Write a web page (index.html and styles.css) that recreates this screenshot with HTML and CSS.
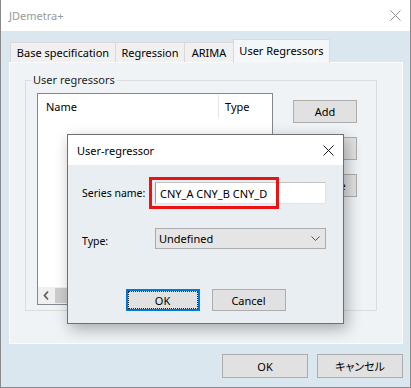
FILE: index.html
```html
<!DOCTYPE html>
<html lang="en">
<head>
  <meta charset="UTF-8">
  <title>JDemetra+</title>
  <link rel="stylesheet" href="styles.css">
</head>
<body>
  <div class="window">
    <div class="titlebar">
      <span class="title inactive">JDemetra+</span>
      <svg class="close" width="11" height="11" viewBox="0 0 11 11">
        <path d="M0.5 0.5 L10.5 10.5 M10.5 0.5 L0.5 10.5" stroke="#8c8c8c" stroke-width="1" fill="none"/>
      </svg>
    </div>

    <div class="client">
      <div class="tabs">
        <div class="tab tab-base">Base specification</div>
        <div class="tab tab-reg">Regression</div>
        <div class="tab tab-arima">ARIMA</div>
        <div class="tab tab-user active">User Regressors</div>
      </div>

      <div class="panel">
        <fieldset class="group">
          <legend>User regressors</legend>
          <div class="group-body">
            <div class="list">
              <div class="list-head">
                <div class="col col-name">Name</div>
                <div class="col col-type">Type</div>
              </div>
              <div class="list-body"></div>
              <div class="hscroll">
                <div class="arrow">
                  <svg width="17" height="17" viewBox="0 0 17 17">
                    <polyline points="10,4.5 6.5,8.5 10,12.5" stroke="#606060" stroke-width="1.8" fill="none"/>
                  </svg>
                </div>
                <div class="thumb"></div>
              </div>
            </div>
            <div class="side-buttons">
              <button class="btn side">Add</button>
              <button class="btn side">Edit</button>
              <button class="btn side">Remove</button>
            </div>
          </div>
        </fieldset>
      </div>

      <div class="footer">
        <button class="btn big">OK</button>
        <button class="btn big jp">キャンセル</button>
      </div>
    </div>

    <!-- dialogo modal encima -->
    <div class="dialog">
      <div class="dialog-title">
        <span class="title">User-regressor</span>
        <svg class="close" width="11" height="11" viewBox="0 0 11 11">
          <path d="M0.5 0.5 L10.5 10.5 M10.5 0.5 L0.5 10.5" stroke="#1a1a1a" stroke-width="1" fill="none"/>
        </svg>
      </div>
      <div class="dialog-body">
        <div class="form">
          <label class="lbl">Series name:</label>
          <div class="field">
            <div class="input">CNY_A CNY_B CNY_D</div>
            <div class="highlight"></div>
          </div>
          <label class="lbl lbl-type">Type:</label>
          <div class="select">
            <span>Undefined</span>
            <svg width="9" height="5" viewBox="0 0 9 5">
              <polyline points="0.5,0.5 4.5,4.5 8.5,0.5" stroke="#555" stroke-width="1" fill="none"/>
            </svg>
          </div>
        </div>
        <div class="dialog-buttons">
          <button class="btn dlg default">OK</button>
          <button class="btn dlg">Cancel</button>
        </div>
      </div>
    </div>
  </div>
</body>
</html>
```

FILE: styles.css
```css
* {
  box-sizing: border-box;
}

body {
  margin: 0;
  background: #5c5c5c;
  font-family: "Noto Sans", "Noto Sans CJK JP", sans-serif;
  font-size: 11px;
  color: #000;
}

.window {
  position: relative;
  width: 411px;
  height: 388px;
  border: 1px solid #8a8a8a;
  border-top: none;
  background: #dae7ef;
  display: flex;
  flex-direction: column;
}

.titlebar {
  height: 31px;
  background: #fff;
  display: flex;
  align-items: center;
  justify-content: space-between;
  padding: 0 9px 0 8px;
}

.title.inactive {
  color: #999;
}

.client {
  flex: 1;
  padding: 8px 7px 9px 8px;
  display: flex;
  flex-direction: column;
}

.tabs {
  display: flex;
  align-items: flex-end;
  height: 23px;
  padding-left: 1px;
}

.tab {
  height: 20px;
  line-height: 19px;
  text-align: center;
  background: #f0f0f0;
  border: 1px solid #d9d9d9;
  border-bottom: none;
  margin-right: -1px;
  white-space: nowrap;
}

.tab-base { width: 106px; }
.tab-reg { width: 70px; }
.tab-arima { width: 50px; }
.tab-user { width: 97px; }

.tab.active {
  height: 24px;
  line-height: 21px;
  background: #f4f7f9;
  border-color: #dadada;
  margin-bottom: -1px;
  position: relative;
  z-index: 1;
}

.panel {
  height: 282px;
  background: #eff3f6;
  border: 1px solid #fbfcfd;
  padding: 9px 0 0 15px;
}

.group {
  margin: 0;
  width: 352px;
  padding: 5px 0 5px 11px;
  border: 1px solid #dcdcdc;
}

.group legend {
  padding: 0 2px;
  margin-left: -6px;
  line-height: 16px;
  color: #1e1e1e;
}

.group-body {
  display: flex;
}

.list {
  width: 236px;
  height: 212px;
  border: 1px solid #828790;
  background: #fff;
  display: flex;
  flex-direction: column;
}

.list-head {
  display: flex;
  height: 25px;
}

.col {
  display: flex;
  align-items: center;
}

.col-name {
  width: 181px;
  padding-left: 8px;
  margin: 1px 0;
  border-right: 1px solid #e5e5e5;
}

.col-type {
  padding-left: 6px;
}

.list-body {
  flex: 1;
}

.hscroll {
  height: 17px;
  display: flex;
  background: #f0f0f0;
}

.arrow {
  width: 17px;
  height: 17px;
}

.thumb {
  width: 160px;
  margin: 1px 0;
  background: #cdcdcd;
}

.side-buttons {
  display: flex;
  flex-direction: column;
  gap: 14px;
  margin-left: 20px;
  padding-top: 7px;
}

.btn {
  font-family: inherit;
  font-size: 11px;
  color: #000;
  background: #e1e1e1;
  border: 1px solid #adadad;
  padding: 0;
}

.btn.side {
  width: 64px;
  height: 23px;
}

.footer {
  margin-top: 10px;
  display: flex;
  justify-content: flex-end;
  gap: 9px;
}

.btn.big {
  width: 86px;
  height: 24px;
}

.btn.jp {
  font-family: "Noto Sans CJK JP", sans-serif;
  font-feature-settings: "palt";
}

.dialog {
  position: absolute;
  left: 66px;
  top: 134px;
  width: 277px;
  height: 190px;
  border: 1px solid #707070;
  background: #e8eef2;
  box-shadow: 3px 5px 14px rgba(0, 0, 0, 0.3);
  display: flex;
  flex-direction: column;
}

.dialog-title {
  height: 30px;
  background: #fff;
  display: flex;
  align-items: center;
  justify-content: space-between;
  padding: 0 9px 0 9px;
}

.dialog-body {
  flex: 1;
  padding-top: 17px;
}

.form {
  display: grid;
  grid-template-columns: 73px 171px;
  grid-template-rows: 22px 21px;
  row-gap: 24px;
  margin: 0 17px 0 14px;
}

.lbl {
  align-self: center;
  font-size: 10.5px;
}

.lbl-type {
  padding-top: 5px;
}

.field {
  position: relative;
}

.input {
  height: 22px;
  background: #fff;
  border: 1px solid #e3e3e3;
  border-left-color: #9a9a9a;
  border-top-color: #c4c4c4;
  padding-left: 4px;
  display: flex;
  align-items: center;
}

.highlight {
  position: absolute;
  left: -6px;
  top: -5px;
  width: 130px;
  height: 32px;
  border: 3px solid #ee1111;
}

.select {
  height: 21px;
  background: #e5e5e5;
  border: 1px solid #acacac;
  padding: 0 5px 0 3px;
  display: flex;
  align-items: center;
  justify-content: space-between;
}

.dialog-buttons {
  margin-top: 40px;
  display: flex;
  justify-content: center;
  gap: 12px;
}

.btn.dlg {
  width: 74px;
  height: 22px;
}

.btn.default {
  border: 2px solid #0078d7;
  outline: 1px dotted #222;
  outline-offset: -3px;
}
```
